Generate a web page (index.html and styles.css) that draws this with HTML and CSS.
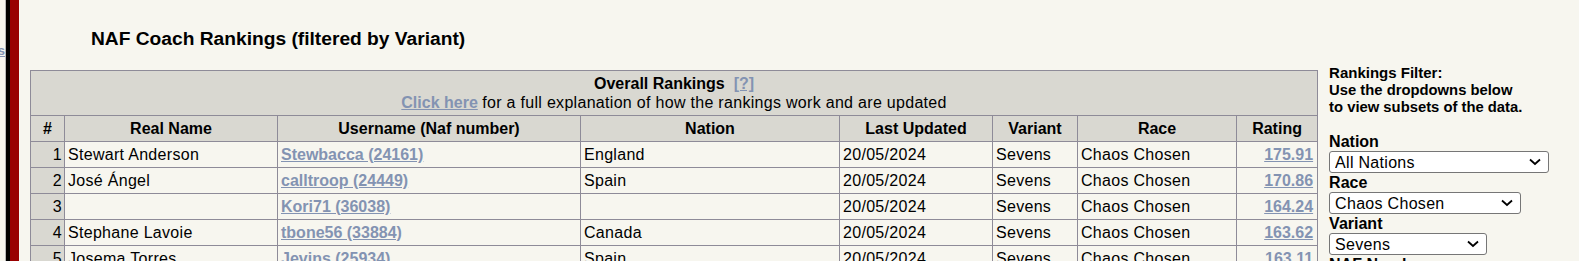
FILE: index.html
```html
<!DOCTYPE html>
<html lang="en">
<head>
<meta charset="utf-8">
<title>NAF Coach Rankings</title>
<link rel="stylesheet" href="styles.css">
</head>
<body>
<div class="page">
  <nav class="sidebar"><a href="#" class="side-link">Links</a></nav>
  <div class="stripe-black"></div>
  <div class="stripe-red"></div>
  <main class="content">
    <h3 class="title">NAF Coach Rankings (filtered by Variant)</h3>
    <div class="row">
      <table class="rankings">
        <colgroup>
          <col class="c-num"><col class="c-name"><col class="c-user"><col class="c-nation">
          <col class="c-date"><col class="c-variant"><col class="c-race"><col class="c-rating">
        </colgroup>
        <thead>
          <tr>
            <th colspan="8" class="cap"><strong>Overall Rankings</strong>&nbsp; <a href="#" class="lnk">[?]</a><br><a href="#" class="lnk">Click here</a> <span class="normal">for a full explanation of how the rankings work and are updated</span></th>
          </tr>
          <tr>
            <th>#</th><th>Real Name</th><th>Username (Naf number)</th><th>Nation</th><th>Last Updated</th><th>Variant</th><th>Race</th><th>Rating</th>
          </tr>
        </thead>
        <tbody>
          <tr><td class="num">1</td><td>Stewart Anderson</td><td><a href="#" class="lnk">Stewbacca (24161)</a></td><td>England</td><td>20/05/2024</td><td>Sevens</td><td>Chaos Chosen</td><td class="rating"><a href="#" class="lnk">175.91</a></td></tr>
          <tr><td class="num">2</td><td>José Ángel</td><td><a href="#" class="lnk">calltroop (24449)</a></td><td>Spain</td><td>20/05/2024</td><td>Sevens</td><td>Chaos Chosen</td><td class="rating"><a href="#" class="lnk">170.86</a></td></tr>
          <tr><td class="num">3</td><td></td><td><a href="#" class="lnk">Kori71 (36038)</a></td><td></td><td>20/05/2024</td><td>Sevens</td><td>Chaos Chosen</td><td class="rating"><a href="#" class="lnk">164.24</a></td></tr>
          <tr><td class="num">4</td><td>Stephane Lavoie</td><td><a href="#" class="lnk">tbone56 (33884)</a></td><td>Canada</td><td>20/05/2024</td><td>Sevens</td><td>Chaos Chosen</td><td class="rating"><a href="#" class="lnk">163.62</a></td></tr>
          <tr><td class="num">5</td><td>Josema Torres</td><td><a href="#" class="lnk">Jevins (25934)</a></td><td>Spain</td><td>20/05/2024</td><td>Sevens</td><td>Chaos Chosen</td><td class="rating"><a href="#" class="lnk">163.11</a></td></tr>
        </tbody>
      </table>
      <aside class="filter">
        <div class="f-head">Rankings Filter:</div>
        <div class="f-sub">Use the dropdowns below<br>to view subsets of the data.</div>
        <label class="f-label">Nation</label>
        <span class="sel-wrap">
          <select class="f-select w-nation"><option>All Nations</option><option>England</option><option>Spain</option></select>
          <svg class="chev" width="12" height="8" viewBox="0 0 12 8"><path d="M1 1.5 L6 6 L11 1.5" fill="none" stroke="#000" stroke-width="1.8"/></svg>
        </span>
        <label class="f-label">Race</label>
        <span class="sel-wrap">
          <select class="f-select w-race"><option>Chaos Chosen</option></select>
          <svg class="chev" width="12" height="8" viewBox="0 0 12 8"><path d="M1 1.5 L6 6 L11 1.5" fill="none" stroke="#000" stroke-width="1.8"/></svg>
        </span>
        <label class="f-label">Variant</label>
        <span class="sel-wrap">
          <select class="f-select w-variant"><option>Sevens</option></select>
          <svg class="chev" width="12" height="8" viewBox="0 0 12 8"><path d="M1 1.5 L6 6 L11 1.5" fill="none" stroke="#000" stroke-width="1.8"/></svg>
        </span>
        <label class="f-label">NAF Number</label>
      </aside>
    </div>
  </main>
</div>
</body>
</html>
```

FILE: styles.css
```css
html, body {
  margin: 0;
  padding: 0;
  background: #f7f6ef;
  font-family: "Liberation Sans", Arial, sans-serif;
  font-size: 16px;
  color: #000;
}

.page {
  display: flex;
  min-height: 100vh;
}

.sidebar {
  width: 5px;
  overflow: hidden;
  direction: rtl;
  padding-top: 43px;
  border-right: 1px solid #b8b8b8;
  font-size: 13px;
  line-height: 15px;
}

.side-link {
  color: #8393b2;
  font-weight: bold;
  text-decoration: underline;
  white-space: nowrap;
}

.stripe-black {
  width: 4px;
  background: #000;
}

.stripe-red {
  width: 9px;
  background: #990000;
}

.content {
  flex: 1;
  padding-left: 11px;
}

.title {
  margin: 0;
  padding: 28px 0 0 61px;
  font-size: 19.2px;
  line-height: 22px;
  font-weight: bold;
}

.row {
  display: flex;
  align-items: flex-start;
  margin-top: 14px;
}

.rankings {
  margin-top: 6px;
  width: 1287px;
  table-layout: fixed;
  border-collapse: collapse;
  flex: none;
}

.c-num { width: 34px; }
.c-name { width: 213px; }
.c-user { width: 303px; }
.c-nation { width: 259px; }
.c-date { width: 153px; }
.c-variant { width: 85px; }
.c-race { width: 159px; }
.c-rating { width: 81px; }

.rankings th,
.rankings td {
  border: 1px solid #8e8b98;
  padding: 3px 3px;
  line-height: 19px;
  font-size: 16px;
  white-space: nowrap;
  overflow: hidden;
}

.rankings th {
  background: #d9d8d1;
  font-weight: bold;
  text-align: center;
}

.rankings td {
  background: #f7f6ef;
  text-align: left;
  letter-spacing: 0.3px;
}

.rankings td.num {
  background: #d9d8d1;
  text-align: right;
  padding-right: 2px;
}

.rankings td.rating {
  text-align: right;
  padding-right: 4px;
}

.cap .normal {
  font-weight: normal;
  letter-spacing: 0.3px;
}

.lnk {
  color: #8393b2;
  font-weight: bold;
  text-decoration: underline;
  letter-spacing: 0;
}

.filter {
  margin-left: 11px;
  display: flex;
  flex-direction: column;
  align-items: flex-start;
}

.f-head {
  font-size: 15px;
  font-weight: bold;
  line-height: 18px;
}

.f-sub {
  font-size: 14.8px;
  font-weight: bold;
  line-height: 16.5px;
  margin-bottom: 17px;
}

.f-label {
  font-size: 16px;
  font-weight: bold;
  line-height: 19px;
}

.sel-wrap {
  position: relative;
  display: block;
  height: 22px;
}

.f-select {
  display: block;
  height: 22px;
  box-sizing: border-box;
  font-family: "Liberation Sans", Arial, sans-serif;
  font-size: 16px;
  letter-spacing: 0.3px;
  color: #000;
  background: #fff;
  border: 1px solid #767676;
  border-radius: 3px;
  padding: 0 20px 0 5px;
  margin: 0;
  appearance: none;
  -webkit-appearance: none;
}

.chev {
  position: absolute;
  right: 8px;
  top: 7px;
  pointer-events: none;
}

.w-nation { width: 220px; }
.w-race { width: 192px; }
.w-variant { width: 158px; }
```
